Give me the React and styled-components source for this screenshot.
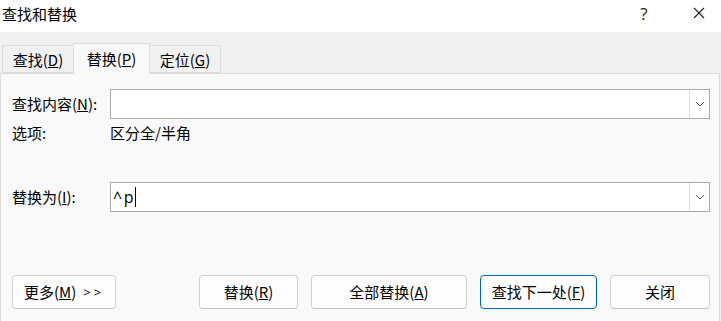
import React from "react";
import styled, { createGlobalStyle } from "styled-components";

const Global = createGlobalStyle`
  html, body { margin: 0; padding: 0; background: #f0f0f0; }
  body { width: 721px; height: 321px; overflow: hidden; }
  * { box-sizing: border-box; }
`;

const FONT = `"Noto Sans CJK SC", "Noto Sans", sans-serif`;

const Window = styled.div`
  width: 721px;
  height: 321px;
  display: flex;
  flex-direction: column;
  font-family: ${FONT};
  font-size: 15px;
  color: #000;
`;

const TitleBar = styled.div`
  height: 32px;
  background: #fff;
  display: flex;
  align-items: center;
  padding: 0 0 4px 2px;
`;

const Title = styled.div`
  flex: 1;
  font-size: 15px;
  line-height: 20px;
`;

const Help = styled.div`
  width: 20px;
  text-align: center;
  font-family: "Open Sans", sans-serif;
  font-size: 17px;
  line-height: 20px;
  margin-right: 39px;
  color: #222;
`;

const CloseIcon = styled.svg`
  width: 12px;
  height: 12px;
  margin-right: 16px;
  margin-bottom: 2px;
`;

const Body = styled.div`
  flex: 1;
  display: flex;
  flex-direction: column;
  padding-top: 11px;
`;

const TabRow = styled.div`
  display: flex;
  align-items: flex-end;
  padding-left: 2px;
  height: 30px;
  position: relative;
  z-index: 1;
`;

const Tab = styled.div`
  width: ${(p) => p.$w}px;
  height: ${(p) => (p.$active ? 31 : 28)}px;
  margin-bottom: ${(p) => (p.$active ? -1 : 0)}px;
  background: ${(p) => (p.$active ? "#f9f9f9" : "#f0f0f0")};
  border: 1px solid #dcdcdc;
  border-bottom: ${(p) => (p.$active ? "none" : "1px solid #dcdcdc")};
  margin-left: ${(p) => (p.$overlap ? -1 : 0)}px;
  display: flex;
  align-items: center;
  justify-content: center;
  padding-top: ${(p) => (p.$active ? 0 : 2)}px;
  line-height: 20px;
`;

const Panel = styled.div`
  flex: 1;
  background: #f9f9f9;
  border: 1px solid #dcdcdc;
  border-bottom: none;
  margin-right: 1px;
  padding: 15px 9px 0 11px;
  display: flex;
  flex-direction: column;
`;

const Row = styled.div`
  display: flex;
  align-items: center;
  height: ${(p) => p.$h}px;
  margin-top: ${(p) => p.$mt || 0}px;
`;

const Label = styled.div`
  width: 98px;
  line-height: 20px;
  flex-shrink: 0;
`;

const Value = styled.div`
  line-height: 20px;
`;

const Combo = styled.div`
  flex: 1;
  height: 30px;
  background: #fff;
  border: 1px solid #a9a9a9;
  display: flex;
  align-items: stretch;
`;

const ComboText = styled.div`
  flex: 1;
  display: flex;
  align-items: center;
  padding-left: 2px;
  font-family: "Open Sans", "Noto Sans", sans-serif;
  font-size: 16px;
  letter-spacing: 1.5px;
`;

const Caret = styled.span`
  display: inline-block;
  width: 1px;
  height: 20px;
  background: #000;
`;

const DropBtn = styled.div`
  width: 20px;
  border-left: 1px solid #dcdcdc;
  display: flex;
  align-items: center;
  justify-content: center;
`;

const ButtonBar = styled.div`
  display: flex;
  margin-top: 63px;
`;

const Group = styled.div`
  display: flex;
  gap: 13px;
  margin-left: auto;
`;

const Button = styled.div`
  width: ${(p) => p.$w}px;
  height: 34px;
  background: #fdfdfd;
  border: 1px solid ${(p) => (p.$primary ? "#0067c0" : "#d0d0d0")};
  border-bottom-color: ${(p) => (p.$primary ? "#0067c0" : "#c0c0c0")};
  border-radius: 4px;
  display: flex;
  align-items: center;
  justify-content: center;
  line-height: 20px;
`;

const Arrows = styled.span`
  margin-left: 7px;
  letter-spacing: 3px;
  font-family: "Open Sans", sans-serif;
  font-size: 13px;
`;

const Chevron = () => (
  <svg width="10" height="6" viewBox="0 0 10 6">
    <path d="M1 1 L5 5 L9 1" fill="none" stroke="#555" strokeWidth="1" />
  </svg>
);

export default function App() {
  return (
    <>
      <Global />
      <Window>
        <TitleBar>
          <Title>查找和替换</Title>
          <Help>?</Help>
          <CloseIcon viewBox="0 0 12 12">
            <path d="M1 1 L11 11 M11 1 L1 11" stroke="#222" strokeWidth="1.1" />
          </CloseIcon>
        </TitleBar>
        <Body>
          <TabRow>
            <Tab $w={72}>
              查找(<u>D</u>)
            </Tab>
            <Tab $w={77} $active $overlap>
              替换(<u>P</u>)
            </Tab>
            <Tab $w={72} $overlap>
              定位(<u>G</u>)
            </Tab>
          </TabRow>
          <Panel>
            <Row $h={30}>
              <Label>
                查找内容(<u>N</u>):
              </Label>
              <Combo>
                <ComboText />
                <DropBtn>
                  <Chevron />
                </DropBtn>
              </Combo>
            </Row>
            <Row $h={20} $mt={4}>
              <Label>选项:</Label>
              <Value>区分全/半角</Value>
            </Row>
            <Row $h={30} $mt={39}>
              <Label>
                替换为(<u>I</u>):
              </Label>
              <Combo>
                <ComboText>
                  ^p
                  <Caret />
                </ComboText>
                <DropBtn>
                  <Chevron />
                </DropBtn>
              </Combo>
            </Row>
            <ButtonBar>
              <Button $w={104}>
                更多(<u>M</u>)<Arrows>&gt;&gt;</Arrows>
              </Button>
              <Group>
                <Button $w={99}>
                  替换(<u>R</u>)
                </Button>
                <Button $w={156}>
                  全部替换(<u>A</u>)
                </Button>
                <Button $w={117} $primary>
                  查找下一处(<u>F</u>)
                </Button>
                <Button $w={100}>关闭</Button>
              </Group>
            </ButtonBar>
          </Panel>
        </Body>
      </Window>
    </>
  );
}
